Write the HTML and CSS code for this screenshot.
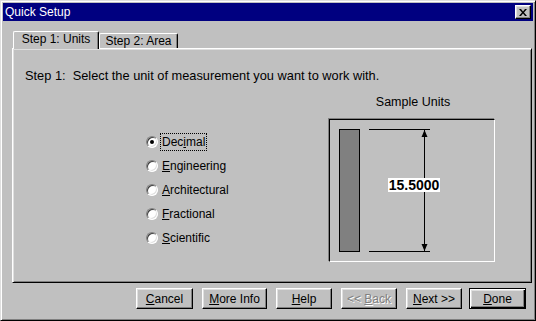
FILE: index.html
```html
<!DOCTYPE html>
<html lang="en">
<head>
  <meta charset="UTF-8" />
  <title>Quick Setup</title>
  <link rel="stylesheet" href="styles.css">
</head>
<body>
  <div class="window">
    <div class="titlebar">
      <span class="title">Quick Setup</span>
      <button class="close">
        <svg width="8" height="7" viewBox="0 0 8 7"><path d="M0 0 L2 0 L4 2.5 L6 0 L8 0 L5 3.5 L8 7 L6 7 L4 4.5 L2 7 L0 7 L3 3.5 Z" fill="#000"/></svg>
      </button>
    </div>

    <div class="body">
      <div class="tabs">
        <div class="tab active">Step 1: Units</div>
        <div class="tab">Step 2: Area</div>
      </div>

      <div class="panel">
        <p class="intro">Step 1:&nbsp;&nbsp;Select the unit of measurement you want to work with.</p>

        <div class="main">
          <div class="options">
            <div class="option"><span class="radio checked"></span><span class="label focus">Dec<u>i</u>mal</span></div>
            <div class="option"><span class="radio"></span><span class="label"><u>E</u>ngineering</span></div>
            <div class="option"><span class="radio"></span><span class="label"><u>A</u>rchitectural</span></div>
            <div class="option"><span class="radio"></span><span class="label"><u>F</u>ractional</span></div>
            <div class="option"><span class="radio"></span><span class="label"><u>S</u>cientific</span></div>
          </div>

          <div class="sample">
            <div class="sample-title">Sample Units</div>
            <div class="sample-box">
              <svg width="164" height="141" viewBox="0 0 164 141">
                <rect x="9.5" y="9.5" width="20" height="122" fill="#808080" stroke="#000"/>
                <line x1="39" y1="9.5" x2="100" y2="9.5" stroke="#000"/>
                <line x1="39" y1="131.5" x2="100" y2="131.5" stroke="#000"/>
                <line x1="94.5" y1="10" x2="94.5" y2="131" stroke="#000"/>
                <path d="M94.5 10 L91.5 17 L97.5 17 Z" fill="#000"/>
                <path d="M94.5 131 L91.5 124 L97.5 124 Z" fill="#000"/>
                <rect x="58" y="58" width="52" height="14" fill="#fff"/>
                <text x="84" y="69.5" text-anchor="middle" class="dim">15.5000</text>
              </svg>
            </div>
          </div>
        </div>
      </div>

      <div class="buttons">
        <button class="btn cancel"><u>C</u>ancel</button>
        <button class="btn more"><u>M</u>ore Info</button>
        <button class="btn"><u>H</u>elp</button>
        <button class="btn disabled">&lt;&lt; <u>B</u>ack</button>
        <button class="btn"><u>N</u>ext &gt;&gt;</button>
        <button class="btn default"><u>D</u>one</button>
      </div>
    </div>
  </div>
</body>
</html>
```

FILE: styles.css
```css
* {
  margin: 0;
  padding: 0;
  box-sizing: border-box;
  font-family: 'Liberation Sans', Arial, sans-serif;
}

body {
  background: #c0c0c0;
  overflow: hidden;
}

.window {
  width: 536px;
  height: 321px;
  background: #c0c0c0;
  border: 1px solid;
  border-color: #dfdfdf #000 #000 #dfdfdf;
  box-shadow: inset 1px 1px #fff, inset -1px -1px #808080;
  padding: 2px;
}

.titlebar {
  height: 18px;
  background: #000080;
  display: flex;
  align-items: center;
  justify-content: space-between;
  padding: 0 2px 0 2px;
}

.title {
  color: #fff;
  font-size: 12px;
}

.close {
  width: 16px;
  height: 14px;
  background: #c0c0c0;
  border: 1px solid;
  border-color: #fff #000 #000 #fff;
  box-shadow: inset -1px -1px #808080, inset 1px 1px #dfdfdf;
  display: flex;
  align-items: center;
  justify-content: center;
}

.close svg {
  display: block;
}

.body {
  padding: 10px 1px 0 9px;
}

.tabs {
  display: flex;
  align-items: flex-end;
  height: 17px;
  padding-left: 1px;
}

.tab {
  font-size: 12px;
  color: #000;
  background: #c0c0c0;
  border: 1px solid;
  border-bottom: none;
  border-color: #fff #000 #000 #fff;
  border-radius: 2px 2px 0 0;
  box-shadow: inset -1px 0 #808080;
  text-align: center;
  height: 15px;
  line-height: 14px;
  width: 79px;
}

.tab.active {
  position: relative;
  z-index: 1;
  width: 86px;
  height: 18px;
  line-height: 15px;
  margin-bottom: -1px;
}

.panel {
  width: 520px;
  height: 235px;
  border: 1px solid;
  border-color: #fff #000 #000 #fff;
  box-shadow: inset 1px 1px #dfdfdf, inset -1px -1px #808080;
  padding: 20px 0 0 12px;
}

.intro {
  font-size: 12.8px;
  line-height: 14px;
  color: #000;
}

.main {
  display: flex;
  margin-top: 12px;
}

.options {
  margin-left: 121px;
  width: 183px;
  padding-top: 35px;
}

.option {
  display: flex;
  align-items: center;
  height: 24px;
  font-size: 12px;
  color: #000;
}

.radio {
  width: 12px;
  height: 12px;
  border-radius: 50%;
  background: #fff;
  border: 1px solid;
  border-color: #808080 #fff #fff #808080;
  box-shadow: inset 1px 1px #404040, inset -1px -1px #dfdfdf;
  display: flex;
  align-items: center;
  justify-content: center;
}

.radio.checked::after {
  content: "";
  width: 4px;
  height: 4px;
  border-radius: 50%;
  background: #000;
}

.label {
  margin-left: 4px;
  line-height: 14px;
}

.label.focus {
  outline: 1px dotted #000;
  outline-offset: 1px;
}

.sample {
  width: 166px;
  text-align: center;
}

.sample-title {
  font-size: 12.5px;
  line-height: 14px;
  color: #000;
  padding-left: 2px;
}

.sample-box {
  margin-top: 10px;
  width: 166px;
  height: 143px;
  border: 1px solid;
  border-color: #000 #fff #fff #000;
  box-shadow: -1px -1px #808080;
}

.sample-box svg {
  display: block;
}

.dim {
  font-family: 'Liberation Sans', Arial, sans-serif;
  font-size: 14px;
  font-weight: bold;
  fill: #000;
}

.buttons {
  display: flex;
  justify-content: flex-end;
  gap: 9px;
  margin-top: 5px;
  padding-right: 6px;
}

.btn {
  width: 56px;
  height: 21px;
  font-size: 12px;
  color: #000;
  background: #c0c0c0;
  border: 1px solid;
  border-color: #fff #000 #000 #fff;
  box-shadow: inset -1px -1px #808080, inset 1px 1px #dfdfdf;
}

.btn.cancel {
  width: 57px;
}

.btn.more {
  width: 65px;
}

.btn.disabled {
  color: #808080;
  text-shadow: 1px 1px #fff;
}

.btn.default {
  width: 57px;
  margin-left: -2px;
  border-color: #000;
  box-shadow: inset 1px 1px #fff, inset -1px -1px #000, inset -2px -2px #808080, inset 2px 2px #dfdfdf;
}
```
